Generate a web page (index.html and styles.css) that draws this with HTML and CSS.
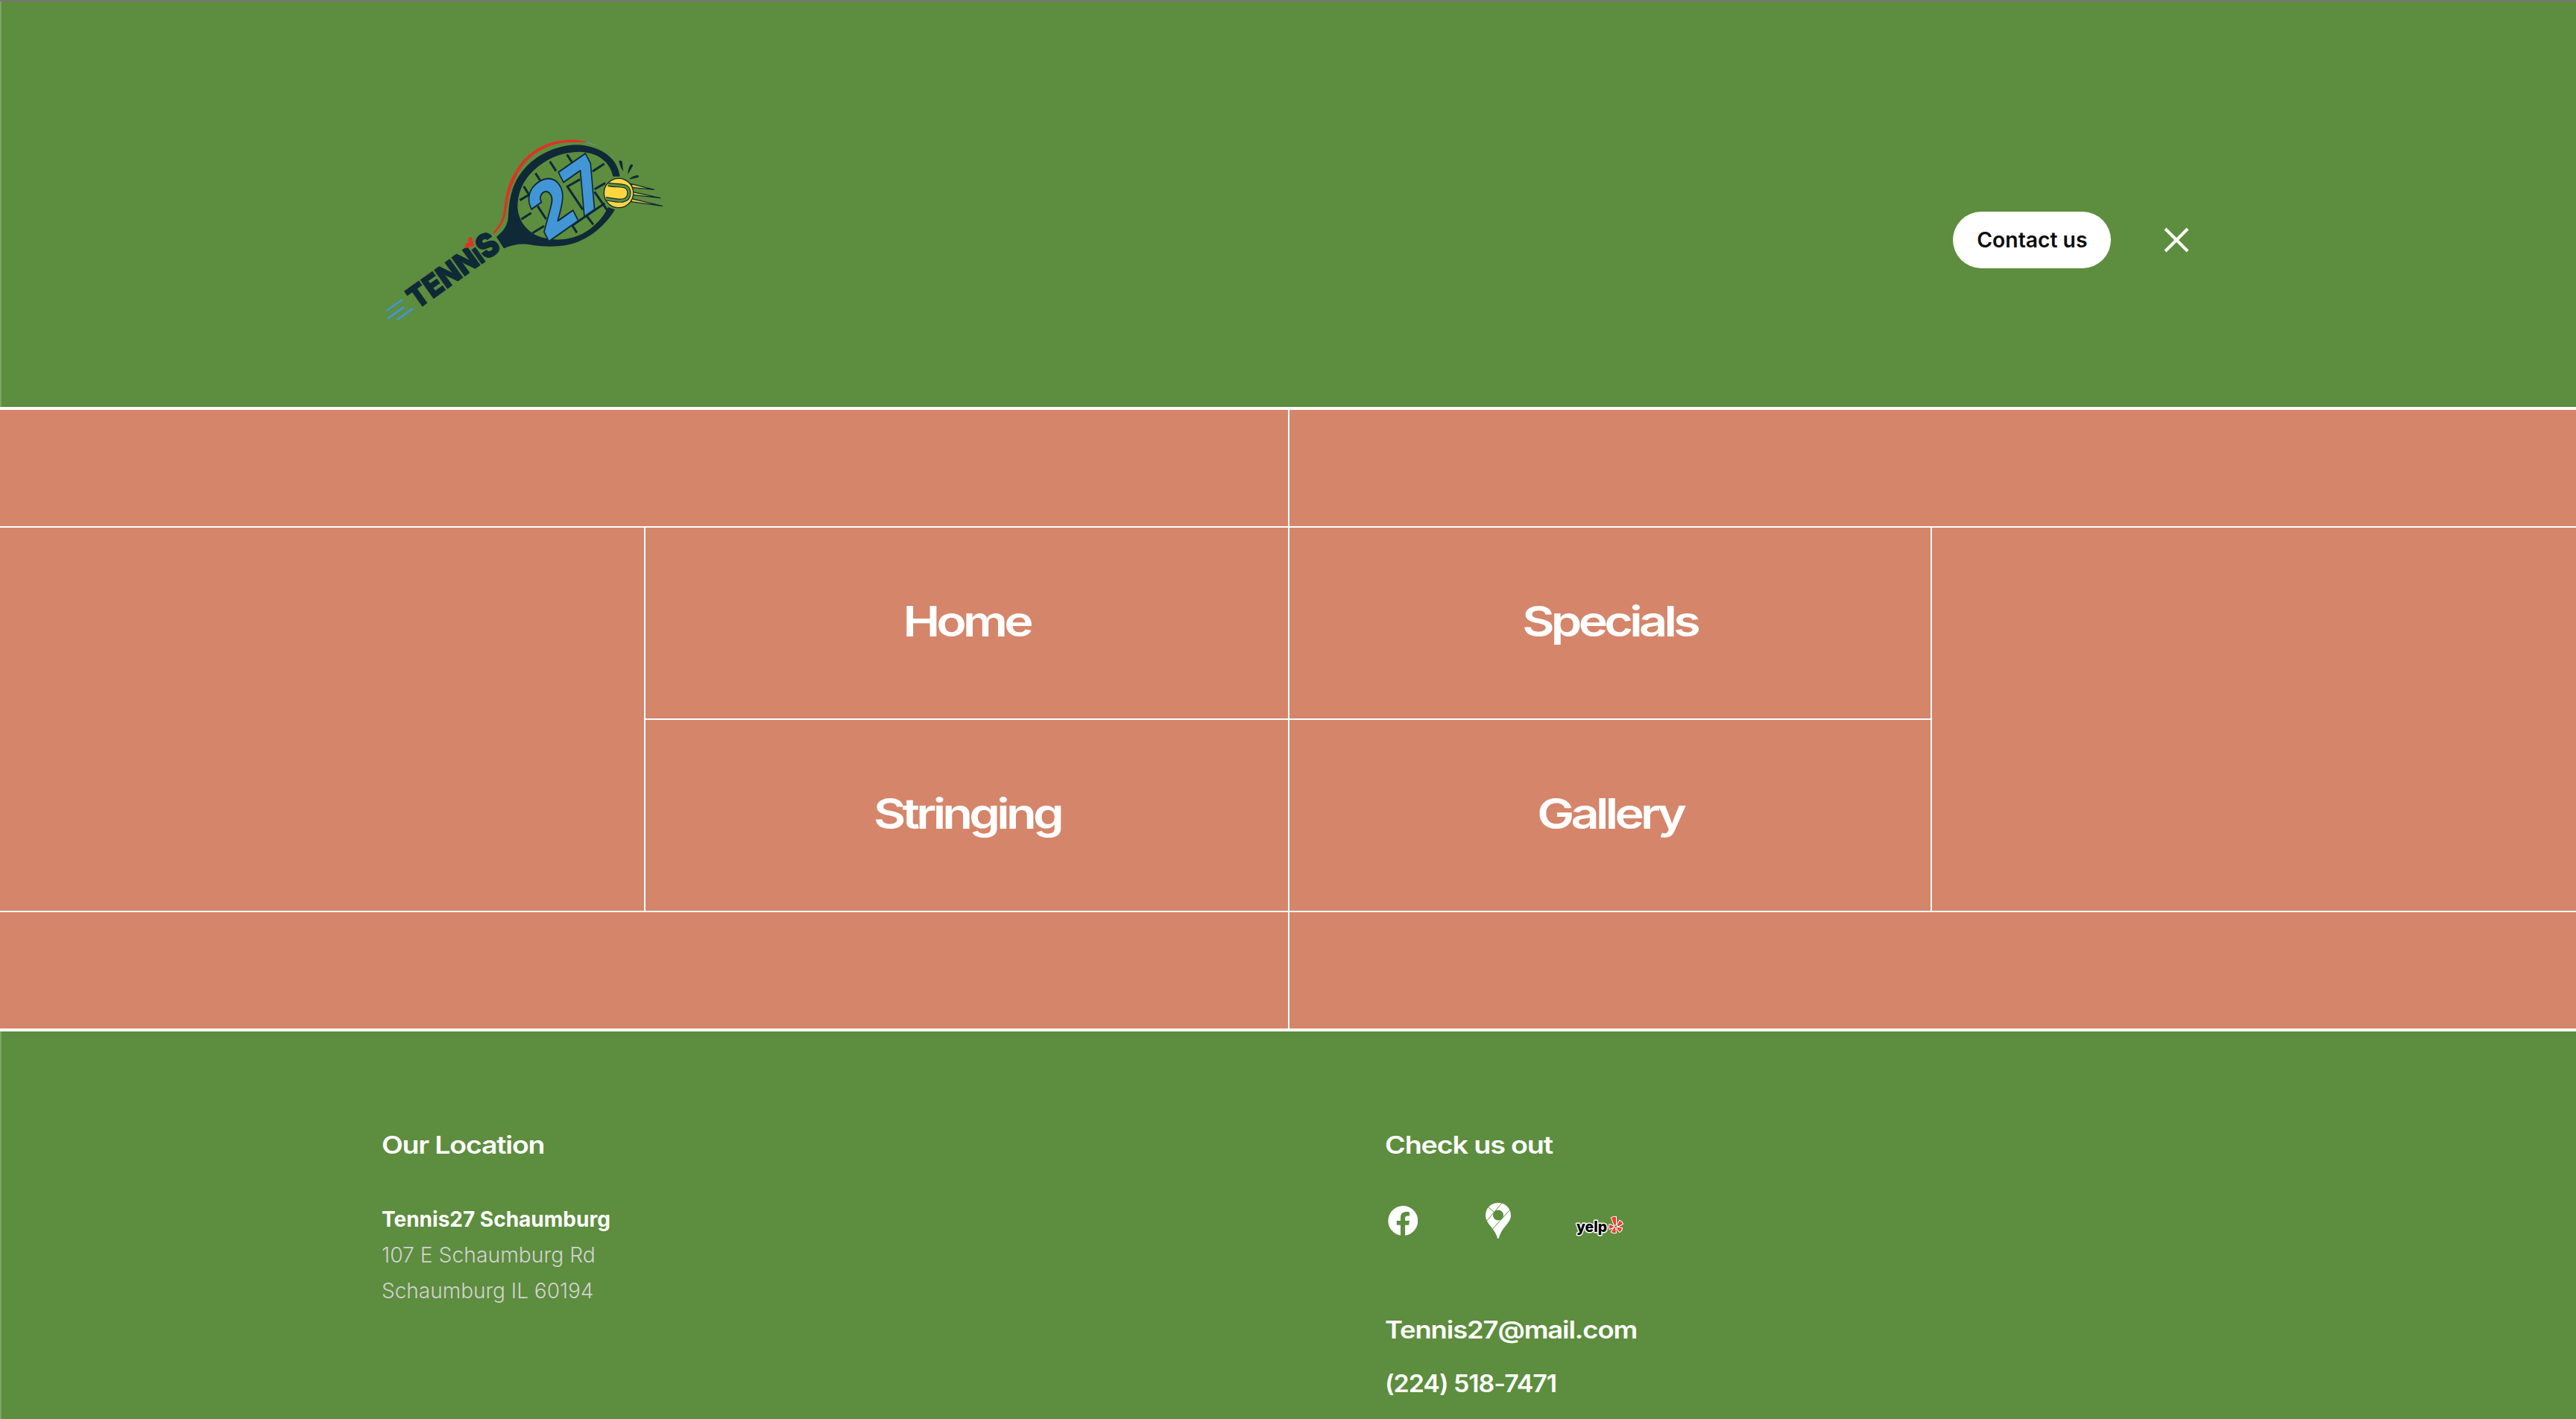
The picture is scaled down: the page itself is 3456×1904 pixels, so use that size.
FILE: index.html
```html
<!DOCTYPE html>
<html lang="en">
<head>
<meta charset="utf-8">
<title>Tennis27</title>
<link rel="stylesheet" href="styles.css">
</head>
<body>
<header class="header">
  <svg class="logo" viewBox="0 0 1200 840" role="img" aria-label="Tennis 27">
    <!-- strings -->
    <g class="strings">
      <path d="M592 296L640 268M598 373L638 347M643 428L690 400M780 243L835 212M885 180L932 149M893 252L936 227M800 400L934 308"/>
      <path d="M608 240L634 282M655 187L682 228M713 140L738 178M782 112L804 146M664 320L698 372M785 243L846 334M805 400L822 427M862 360L888 394M893 262L945 338"/>
    </g>
    <!-- frame and throat -->
    <path class="ink" d="M498 444C525 420 546 400 546 352C550 270 570 215 612 168C660 112 740 74 820 73C900 75 985 115 995 200L967 200C955 140 905 102 830 101C740 103 660 150 615 215C590 252 583 290 583 325C586 375 615 415 655 436C690 452 730 457 770 453C840 446 910 400 948 324L975 334C945 385 890 440 820 466C770 485 700 485 650 478C605 468 570 472 528 490Z"/>
    <path class="swoosh" d="M485 424C505 405 524 374 527 340C534 280 541 235 573 183C613 107 695 54 790 53C820 52 845 57 864 63C840 64 815 62 790 63C703 66 627 112 584 188C552 246 544 290 537 340C533 380 510 410 490 431Z"/>
    <path class="tip" d="M862 62L895 74"/>
    <text class="number" transform="translate(699 469) rotate(-35) skewX(-8)" textLength="314" lengthAdjust="spacingAndGlyphs"><tspan class="two">2</tspan>7</text>
    <!-- ball -->
    <g class="trail">
      <path d="M1040 230L1132 253L1045 245ZM1047 263L1157 287L1046 274ZM1043 290L1165 319L1040 302Z"/>
    </g>
    <circle class="ball" cx="990" cy="267" r="59"/>
    <path class="seam-edge" d="M948 232C985 242 1031 225 1032 267C1031 311 980 297 938 290"/>
    <path class="seam" d="M948 232C985 242 1031 225 1032 267C1031 311 980 297 938 290"/>
    <path class="ink" d="M991 138Q998 132 1004 140L1009 180Q996 165 991 138ZM1038 152Q1050 150 1046 160L1027 192Q1027 170 1038 152ZM1066 195Q1077 199 1067 205L1032 212Q1043 198 1066 195Z"/>
    <!-- wordmark -->
    <text class="word" transform="translate(178 738) rotate(-35.500)" textLength="422" lengthAdjust="spacingAndGlyphs">TENN<tspan class="word-i">I</tspan><tspan class="word-s">S</tspan></text>
    <path class="heart" d="M408 479L374 490Q368 480 376 471Q382 466 386 467Q380 450 391 444Q400 444 402 457Z"/>
    <path class="speed" d="M59 738L118 697M63 770L123 728M101 775L160 733"/>
  </svg>
  <nav class="actions">
    <a class="contact"><span class="contact-label">Contact us</span></a>
    <svg class="close" viewBox="0 0 48 48"><path d="M9 9L39 39M39 9L9 39"/></svg>
  </nav>
</header>

<main class="court">
  <div class="alley"><div></div><div></div></div>
  <div class="boxes">
    <div class="side"></div>
    <div class="menu">
      <a class="cell"><span>Home</span></a>
      <a class="cell"><span>Specials</span></a>
      <a class="cell"><span>Stringing</span></a>
      <a class="cell"><span>Gallery</span></a>
    </div>
    <div class="side"></div>
  </div>
  <div class="alley"><div></div><div></div></div>
</main>

<footer class="footer">
  <section>
    <h2 class="title"><span class="w-location">Our Location</span></h2>
    <div class="address">
      <strong>Tennis27 Schaumburg</strong>
      <p><span class="w-street">107 E Schaumburg Rd</span></p>
      <p><span>Schaumburg IL 60194</span></p>
    </div>
  </section>
  <section>
    <h2 class="title"><span class="w-check">Check us out</span></h2>
    <div class="social">
      <svg class="facebook" viewBox="0 0 40 40"><path d="M20 0a20 20 0 0 1 3.1 39.8V25.8h5l.9-5.8h-5.900v-3.400c0-1.900.8-3.200 3.400-3.200H29V8.400c-6.500-1.300-12-.2-12 7.200V20h-5.200v5.800H17v13.900A20 20 0 0 1 20 0Z"/></svg>
      <svg class="pin" viewBox="0 0 34 48">
        <path class="pin-body" d="M17 0C7 0 0 7.500 0 16.500C0 23 4 28 8 33C12 38 14.500 42 16 47Q17 49 18 47C19.500 41 22 37 26 32C30 27 34 23 34 16.500C34 7.500 27 0 17 0Z"/>
        <circle class="pin-hole" cx="17" cy="16.500" r="7"/>
        <path class="pin-road" d="M4 6L11 12M22 0L1.500 24.500M33 9L9.500 35"/>
      </svg>
      <svg class="yelp" viewBox="0 0 64 32">
        <text class="yelp-word" x="1" y="24" textLength="41" lengthAdjust="spacingAndGlyphs">yelp</text>
        <path class="burst" d="M48 5Q51 3 54 4L54 14Q52 16 51 13ZM56 14L59 9Q62 10 63 13L58 16Q55 17 56 14ZM57 18L62 19Q62 22 59 24L55.500 20Q55 17 57 18ZM53 19L54 25Q51 26 48 24L51 19Q52 17 53 19ZM50 18L45.500 20Q44 17 45.500 14L50 16Q52 17 50 18Z"/>
      </svg>
    </div>
    <p class="title mail"><span class="w-mail">Tennis27@mail.com</span></p>
    <p class="title phone"><span class="w-phone">(224) 518-7471</span></p>
  </section>
</footer>
</body>
</html>
```
FILE: styles.css
```css
* { box-sizing: border-box; }
body {
  margin: 0;
  height: 1904px;
  overflow: hidden;
  display: flex;
  flex-direction: column;
  background: #5d8d3e;
  color: #fff;
  font-family: Inter, "Liberation Sans", sans-serif;
  box-shadow: inset 2px 0 #7da466;
}
h2, p { margin: 0; }
span { display: inline-block; white-space: nowrap; }

.header {
  flex: none;
  height: 546px;
  padding: 168px 512px 0 500px;
  border-top: 2px solid #777778;
  display: flex;
  justify-content: space-between;
  align-items: flex-start;
}
.logo { width: 400px; height: 280px; }
.ink { fill: #0f2936; }
.strings { stroke: #0f2936; stroke-width: 9; fill: none; }
.swoosh { fill: #e03127; }
.tip { stroke: #5b93b8; stroke-width: 4; }
.number {
  font-weight: 900;
  font-size: 283px;
  fill: #4296d6;
  stroke: #0f2936;
  stroke-width: 6;
}
.two { font-size: 298px; }
.word { font-weight: 900; font-size: 124px; fill: #0f2936; stroke: #0f2936; stroke-width: 3; }
.word-i { font-size: 94px; }
.word-s { font-size: 134px; }
.heart { fill: #e03127; }
.speed { stroke: #4296d6; stroke-width: 8; stroke-linecap: round; }
.ball { fill: #fbd63f; stroke: #0f2936; stroke-width: 4; }
.seam-edge { fill: none; stroke: #0f2936; stroke-width: 16; }
.seam { fill: none; stroke: #5d8d3e; stroke-width: 9; }
.trail { fill: #d9c648; stroke: #0f2936; stroke-width: 4; stroke-linejoin: round; }

.actions { display: flex; align-items: center; gap: 64px; margin-top: 114px; }
.contact {
  width: 212px;
  height: 76px;
  border-radius: 38px;
  background: #fff;
  color: #0b0b0b;
  display: flex;
  align-items: center;
  justify-content: center;
  font-size: 28px;
  font-weight: 600;
}
.contact-label { transform: scaleX(1.01); }
.close { width: 48px; height: 48px; stroke: #fff; stroke-width: 4; }

.court {
  flex: none;
  height: 838px;
  border-top: 4px solid #fff;
  border-bottom: 4px solid #fff;
  background: #fff;
  display: grid;
  grid-template-rows: 156px 514px 156px;
  gap: 2px;
}
.alley { display: grid; grid-template-columns: 1728px 1fr; gap: 2px; }
.alley div, .side, .cell { background: #d5856a; }
.boxes { display: grid; grid-template-columns: 864px 1724px 864px; gap: 2px; }
.menu { display: grid; grid-template-columns: 862px 860px; grid-template-rows: 256px 256px; gap: 2px; }
.cell {
  display: flex;
  align-items: center;
  justify-content: center;
  padding-bottom: 4px;
  font-size: 56px;
  font-weight: 600;
  letter-spacing: -4px;
}
.cell span { transform: scaleX(1.19); }

.footer {
  flex: none;
  height: 520px;
  padding: 133px 0 0 512px;
  display: grid;
  grid-template-columns: 1346px 1fr;
}
.title { font-size: 32px; font-weight: 600; line-height: 40px; letter-spacing: -1px; }
.title span { transform-origin: left; }
.w-location { transform: scaleX(1.17); }
.w-check { transform: scaleX(1.18); }
.w-mail { transform: scaleX(1.138); }
.w-phone { transform: scaleX(1.062); }
.address { margin-top: 55px; font-size: 28px; line-height: 48px; color: #d2d2d2; font-weight: 350; }
.address strong { display: block; font-weight: 700; color: #fff; }
.address span { transform-origin: left; }
.w-street { transform: scaleX(1.01); }
.social { display: flex; align-items: center; height: 60px; margin: 51px 0 97px 4px; }
.facebook { width: 40px; height: 40px; fill: #fff; }
.pin { width: 34px; height: 48px; margin-left: 91px; }
.pin-body { fill: #fff; }
.pin-hole { fill: #5d8d3e; }
.pin-road { stroke: #5d8d3e; stroke-width: 1; }
.yelp { width: 64px; height: 32px; margin: 14px 0 0 87px; overflow: visible; }
.yelp-word { font-size: 20px; font-weight: 800; fill: #000; stroke: #fff; stroke-width: 3; paint-order: stroke; stroke-linejoin: round; }
.burst { fill: #f43a30; stroke: #fff; stroke-width: 2; paint-order: stroke; }
.phone { margin-top: 32px; }
```
